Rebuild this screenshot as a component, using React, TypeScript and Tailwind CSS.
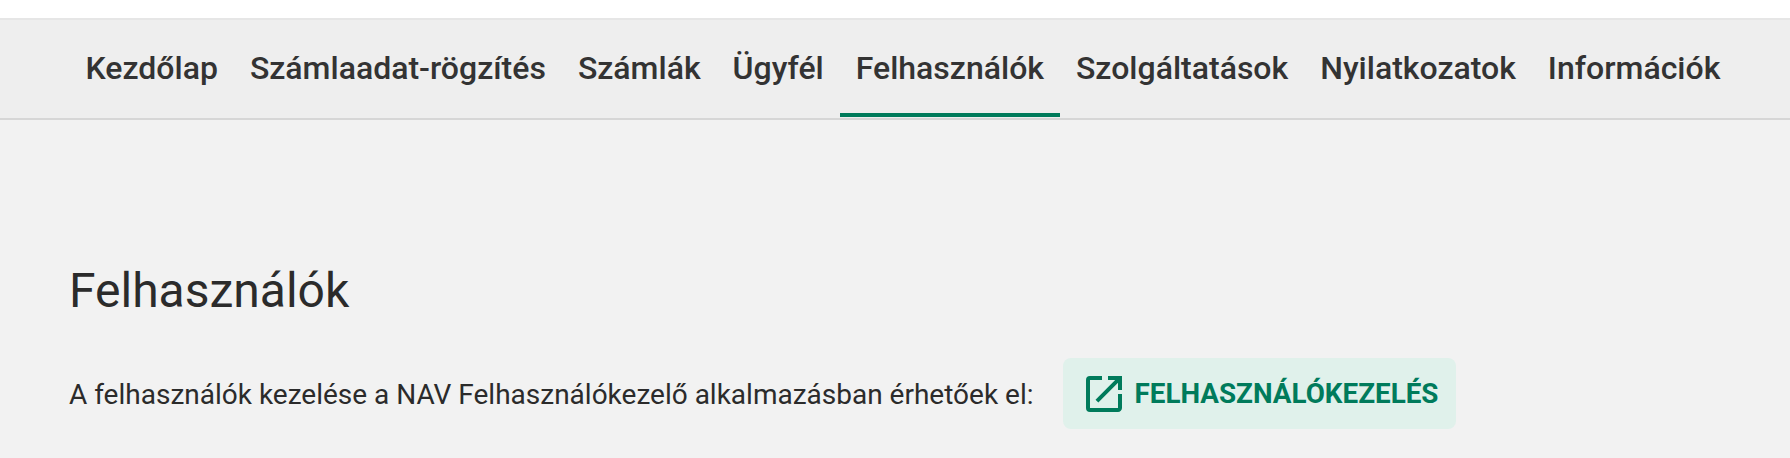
import React from 'react';

const tabs = ["Kezdőlap", "Számlaadat-rögzítés", "Számlák", "Ügyfél", "Felhasználók", "Szolgáltatások", "Nyilatkozatok", "Információk"];

function ExternalIcon() {
  return (
    <svg viewBox="3 3 18 18" className="w-9 h-9 shrink-0" fill="#007b5b">
      <path d="M19 19H5V5h6V3H5a2 2 0 0 0-2 2v14a2 2 0 0 0 2 2h14c1.1 0 2-.9 2-2v-7h-2v7zM14 3v2h3.59l-9.83 9.83 1.41 1.41L19 6.41V10h2V3h-7z" />
    </svg>
  );
}

export default function App() {
  return (
    <div className="w-[1790px] h-[458px] overflow-hidden bg-[#f2f2f2] text-[#2b2b2b] font-['Roboto',sans-serif]">
      <div className="h-[18px] bg-white" />

      {/* Nav */}
      <div className="h-[102px] bg-[#eeeeee] border-t-2 border-b-2 border-t-[#e6e6e6] border-b-[#d6d6d6] pl-[69.5px] flex">
        {tabs.map((t) => (
          <div
            key={t}
            className={`h-[97px] px-4 pt-[3px] flex items-center text-[32px] font-medium text-[#333333] whitespace-nowrap ${t === "Felhasználók" ? "border-b-4 border-[#007b5b]" : "border-b-4 border-transparent"}`}
          >
            {t}
          </div>
        ))}
      </div>

      {/* Content */}
      <div className="pl-[69px]">
        <h1 className="mt-[143px] text-[48px] leading-[56px] font-normal">Felhasználók</h1>
        <div className="mt-[39px] flex items-center">
          <p className="text-[28px] leading-8 pt-[2px]">A felhasználók kezelése a NAV Felhasználókezelő alkalmazásban érhetőek el:</p>
          <button className="ml-[29px] h-[71px] pl-[23px] pr-[18px] flex items-center gap-[13px] rounded-lg bg-[#e0f1eb] text-[#007b5b] text-[27.8px] font-bold whitespace-nowrap">
            <ExternalIcon />
            FELHASZNÁLÓKEZELÉS
          </button>
        </div>
      </div>
    </div>
  );
}
